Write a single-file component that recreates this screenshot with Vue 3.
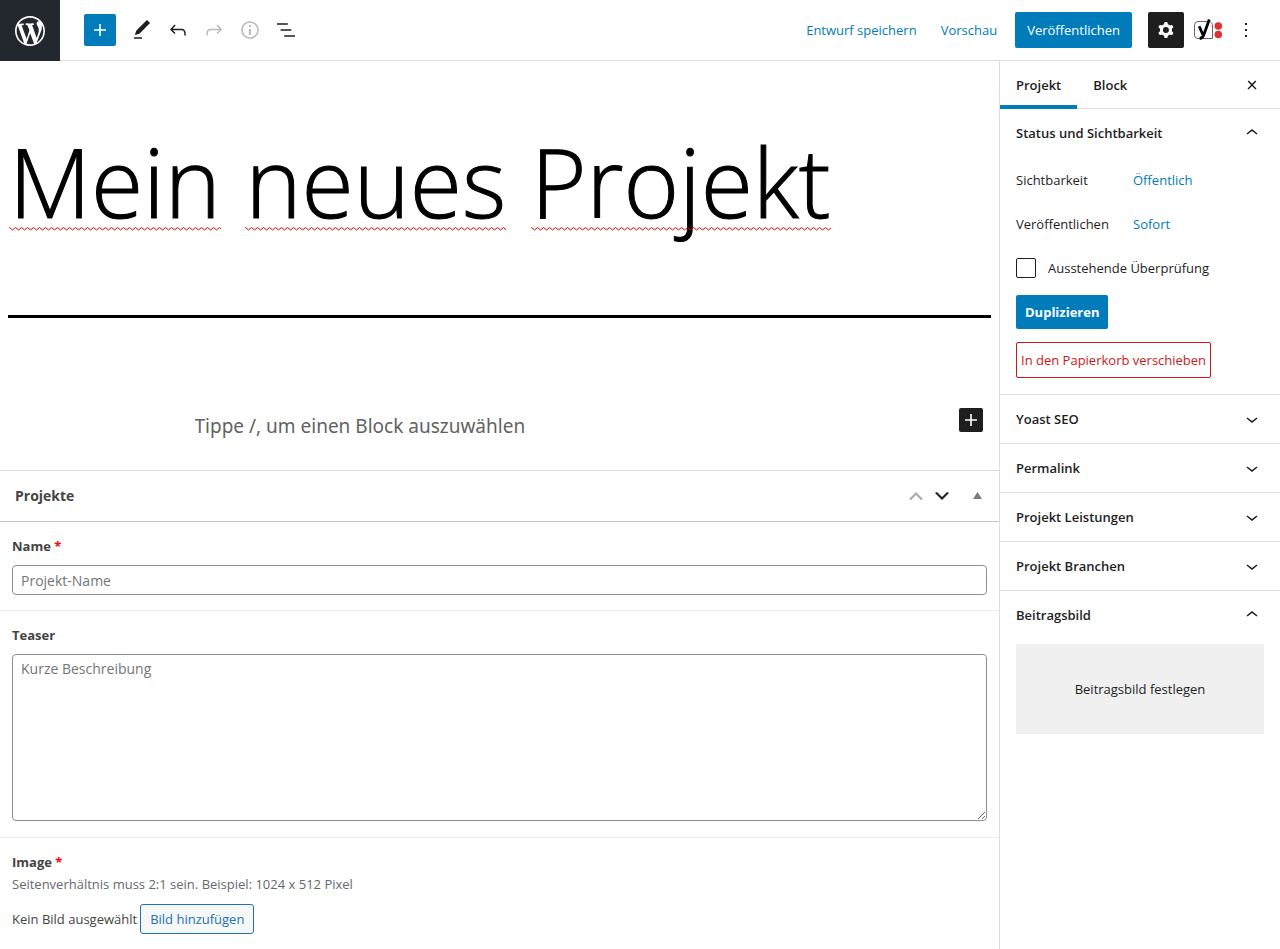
<script setup>
import { ref } from 'vue'

const icons = {
  wordpress: 'M20 10c0-5.51-4.49-10-10-10C4.48 0 0 4.49 0 10c0 5.52 4.48 10 10 10 5.51 0 10-4.48 10-10zM7.78 15.37L4.37 6.22c.55-.02 1.17-.08 1.17-.08.5-.06.44-1.13-.06-1.11 0 0-1.45.11-2.37.11-.18 0-.37 0-.58-.01C4.12 2.69 6.87 1.11 10 1.11c2.33 0 4.45.87 6.05 2.34-.68-.11-1.65.39-1.65 1.58 0 .74.45 1.36.9 2.1.35.61.55 1.36.55 2.46 0 1.49-1.4 5-1.4 5l-3.03-8.37c.54-.02.82-.17.82-.17.5-.05.44-1.25-.06-1.22 0 0-1.44.12-2.38.12-.87 0-2.33-.12-2.33-.12-.5-.03-.56 1.2-.06 1.22l.92.08 1.26 3.41zM17.41 10c.24-.64.74-1.87.43-4.25.7 1.29 1.05 2.71 1.05 4.25 0 3.29-1.73 6.24-4.4 7.78.97-2.59 1.94-5.2 2.92-7.78zM6.1 18.09C3.12 16.65 1.11 13.53 1.11 10c0-1.3.23-2.48.72-3.59C3.25 10.3 4.67 14.2 6.1 18.09zm4.03-6.63l2.58 6.98c-.86.29-1.76.45-2.71.45-.79 0-1.57-.11-2.29-.33.81-2.38 1.62-4.74 2.42-7.1z',
  plus: 'M18 11.2h-5.2V6h-1.6v5.2H6v1.6h5.2V18h1.6v-5.2H18z',
  edit: 'M20.1 5.1L16.9 2 6.2 12.7l-1.3 4.4 4.5-1.3L20.1 5.1zM4 20.8h8v-1.5H4v1.5z',
  undo: 'M18.3 11.7c-.6-.6-1.4-.9-2.3-.9H6.7l2.9-3.3-1.1-1-4.5 5L8.5 16l1-1-2.7-2.7H16c.5 0 .9.2 1.3.5 1 1 1 3.4 1 4.5v.3h1.5v-.2c0-1.5 0-4.3-1.5-5.7z',
  redo: 'M15.6 6.5l-1.1 1 2.9 3.3H8c-.9 0-1.7.3-2.3.9-1.4 1.5-1.4 4.2-1.4 5.6v.2h1.5v-.3c0-1.1 0-3.5 1-4.5.3-.3.7-.5 1.3-.5h9.2L14.5 15l1.1 1.1 4.6-4.6-4.6-5z',
  info: 'M12 3.2c-4.8 0-8.8 3.9-8.8 8.8 0 4.8 3.9 8.8 8.8 8.8 4.8 0 8.8-3.9 8.8-8.8 0-4.8-4-8.8-8.8-8.8zm0 16c-4 0-7.2-3.3-7.2-7.2C4.8 8 8 4.8 12 4.8s7.2 3.3 7.2 7.2c0 4-3.2 7.2-7.2 7.2zM11 17h2v-6h-2v6zm0-8h2V7h-2v2z',
  list: 'M13.8 5.2H3v1.5h10.8V5.2zm-3.6 12v1.5H21v-1.5H10.2zm7.2-6H6.6v1.5h10.8v-1.5z',
  cog: 'M10.289 4.836A1 1 0 0111.275 4h1.306a1 1 0 01.987.836l.244 1.466c.787.26 1.503.679 2.108 1.218l1.393-.522a1 1 0 011.216.437l.653 1.13a1 1 0 01-.23 1.273l-1.148.944a6.025 6.025 0 010 2.435l1.149.946a1 1 0 01.23 1.272l-.653 1.13a1 1 0 01-1.216.437l-1.394-.522c-.605.54-1.32.958-2.108 1.218l-.244 1.466a1 1 0 01-.987.836h-1.306a1 1 0 01-.986-.836l-.244-1.466a5.995 5.995 0 01-2.108-1.218l-1.394.522a1 1 0 01-1.217-.436l-.653-1.131a1 1 0 01.23-1.272l1.149-.946a6.026 6.026 0 010-2.435l-1.148-.944a1 1 0 01-.23-1.272l.653-1.131a1 1 0 011.217-.437l1.393.522a5.994 5.994 0 012.108-1.218l.244-1.466zM14.929 12a3 3 0 11-6 0 3 3 0 016 0z',
  more: 'M13 19h-2v-2h2v2zm0-6h-2v-2h2v2zm0-6h-2V5h2v2z',
  close: 'M13 11.9l3.3-3.4-1.1-1-3.2 3.3-3.2-3.3-1.1 1 3.3 3.4-3.5 3.6 1 1L12 13l3.5 3.5 1-1z',
  down: 'M17.5 11.6L12 16l-5.5-4.4.9-1.2L12 14l4.5-3.6 1 1.2z',
  up: 'M6.5 12.4L12 8l5.5 4.4-.9 1.2L12 10l-4.5 3.6-1-1.2z',
}

const tools = [
  { icon: 'edit', label: 'Werkzeuge' },
  { icon: 'undo', label: 'Rückgängig' },
  { icon: 'redo', label: 'Wiederholen', disabled: true },
  { icon: 'info', label: 'Details', disabled: true },
  { icon: 'list', label: 'Listenansicht' },
]

const titleWords = ['Mein', 'neues', 'Projekt']
const closedPanels = ['Yoast SEO', 'Permalink', 'Projekt Leistungen', 'Projekt Branchen']

const pending = ref(false)
const name = ref('')
const teaser = ref('')
</script>

<template>
  <div class="editor">
    <header class="topbar">
      <a class="logo" href="#" aria-label="Beiträge ansehen">
        <svg width="36" height="36" viewBox="-2 -2 24 24"><path :d="icons.wordpress" /></svg>
      </a>
      <div class="tools">
        <button class="insert" type="button" aria-label="Block hinzufügen">
          <svg width="24" height="24" viewBox="0 0 24 24"><path :d="icons.plus" /></svg>
        </button>
        <button
          v-for="tool in tools"
          :key="tool.icon"
          class="tool"
          type="button"
          :aria-label="tool.label"
          :disabled="tool.disabled"
        >
          <svg width="24" height="24" viewBox="0 0 24 24"><path :d="icons[tool.icon]" /></svg>
        </button>
      </div>
      <div class="actions">
        <button class="link" type="button">Entwurf speichern</button>
        <button class="link" type="button">Vorschau</button>
        <button class="publish" type="button">Veröffentlichen</button>
        <button class="settings" type="button" aria-label="Einstellungen">
          <svg width="24" height="24" viewBox="0 0 24 24"><path fill-rule="evenodd" :d="icons.cog" /></svg>
        </button>
        <button class="yoast" type="button" aria-label="Yoast">
          <svg width="32" height="24" viewBox="0 0 32 24">
            <path d="M15 3.500H6a3.500 3.500 0 0 0-3.500 3.500v10A3.500 3.500 0 0 0 6 20.500H20.500V8c0-2-.7-3.400-2-4" fill="none" stroke="#666" />
            <path d="M7.200 8.200l3.600 8.300M17.300 1.500l-5.200 14.500c-.9 2.600-2 4.400-4.400 4.700" fill="none" stroke="#000" stroke-width="2.800" />
            <circle cx="26.300" cy="8" r="3.800" fill="#dc3232" />
            <circle cx="26.300" cy="16.500" r="3.800" fill="#dc3232" />
          </svg>
        </button>
        <button class="more" type="button" aria-label="Optionen">
          <svg width="24" height="24" viewBox="0 0 24 24"><path :d="icons.more" /></svg>
        </button>
      </div>
    </header>

    <div class="body">
      <main class="content">
        <section class="canvas">
          <h1 class="title">
            <template v-for="word in titleWords" :key="word"><span class="misspelled">{{ word }}</span>{{ ' ' }}</template>
          </h1>
          <div class="block-row">
            <input class="prompt" type="text" aria-label="Neuer Block" placeholder="Tippe /, um einen Block auszuwählen" />
            <button class="inserter" type="button" aria-label="Block hinzufügen">
              <svg width="24" height="24" viewBox="0 0 24 24"><path :d="icons.plus" /></svg>
            </button>
          </div>
        </section>

        <section class="metabox">
          <div class="metabox-head">
            <h2>Projekte</h2>
            <button class="order" type="button" aria-label="Nach oben" disabled>
              <svg width="20" height="20" viewBox="0 0 20 20"><path d="M15 14l-5-5-5 5-2-1 7-7 7 7z" /></svg>
            </button>
            <button class="order" type="button" aria-label="Nach unten">
              <svg width="20" height="20" viewBox="0 0 20 20"><path d="M5 6l5 5 5-5 2 1-7 7-7-7z" /></svg>
            </button>
            <button class="toggle" type="button" aria-label="Bedienfeld umschalten">
              <svg width="20" height="20" viewBox="0 0 20 20"><path d="M6 13l4.500-7 4.500 7z" /></svg>
            </button>
          </div>
          <div class="field">
            <label for="name">Name <span class="required">*</span></label>
            <input id="name" v-model="name" class="box" type="text" placeholder="Projekt-Name" />
          </div>
          <div class="field">
            <label for="teaser">Teaser</label>
            <textarea id="teaser" v-model="teaser" class="box" placeholder="Kurze Beschreibung"></textarea>
          </div>
          <div class="field">
            <label for="image">Image <span class="required">*</span></label>
            <p class="hint">Seitenverhältnis muss 2:1 sein. Beispiel: 1024 x 512 Pixel</p>
            <div class="image-row">
              <span>Kein Bild ausgewählt</span>
              <button id="image" class="add-image" type="button">Bild hinzufügen</button>
            </div>
          </div>
        </section>
      </main>

      <aside class="sidebar">
        <div class="tabs">
          <button class="tab active" type="button">Projekt</button>
          <button class="tab" type="button">Block</button>
          <button class="close" type="button" aria-label="Einstellungen schließen">
            <svg width="24" height="24" viewBox="0 0 24 24"><path :d="icons.close" /></svg>
          </button>
        </div>

        <section class="panel">
          <button class="panel-head" type="button" aria-expanded="true">
            <span>Status und Sichtbarkeit</span>
            <svg width="24" height="24" viewBox="0 0 24 24"><path :d="icons.up" /></svg>
          </button>
          <div class="status">
            <div class="row"><span>Sichtbarkeit</span><button class="link" type="button">Öffentlich</button></div>
            <div class="row"><span>Veröffentlichen</span><button class="link" type="button">Sofort</button></div>
            <label class="check"><input v-model="pending" type="checkbox" />Ausstehende Überprüfung</label>
            <button class="duplicate" type="button">Duplizieren</button>
            <button class="trash" type="button">In den Papierkorb verschieben</button>
          </div>
        </section>

        <section v-for="panel in closedPanels" :key="panel" class="panel">
          <button class="panel-head" type="button" aria-expanded="false">
            <span>{{ panel }}</span>
            <svg width="24" height="24" viewBox="0 0 24 24"><path :d="icons.down" /></svg>
          </button>
        </section>

        <section class="panel last">
          <button class="panel-head" type="button" aria-expanded="true">
            <span>Beitragsbild</span>
            <svg width="24" height="24" viewBox="0 0 24 24"><path :d="icons.up" /></svg>
          </button>
          <div class="featured">
            <button type="button">Beitragsbild festlegen</button>
          </div>
        </section>
      </aside>
    </div>
  </div>
</template>

<style>
body {
  background: #fff;
}
</style>

<style scoped>
.editor,
.editor * {
  box-sizing: border-box;
}

.editor {
  display: flex;
  flex-direction: column;
  min-height: 100vh;
  color: #1e1e1e;
  font-family: "Open Sans", "Noto Sans", sans-serif;
  font-size: 13px;
  line-height: 20px;
}

button,
input,
textarea {
  margin: 0;
  font: inherit;
  color: inherit;
}

button {
  display: flex;
  align-items: center;
  justify-content: center;
  padding: 0;
  border: 0;
  border-radius: 2px;
  background: none;
  white-space: nowrap;
}

svg {
  display: block;
  flex: none;
  fill: currentColor;
}

.topbar {
  display: flex;
  align-items: center;
  height: 61px;
  border-bottom: 1px solid #ddd;
}

.logo {
  display: flex;
  align-items: center;
  justify-content: center;
  width: 60px;
  height: 61px;
  margin-bottom: -1px;
  background: #23282e;
  color: #fff;
}

.tools {
  display: flex;
  align-items: center;
  margin-left: 24px;
}

.insert {
  width: 32px;
  height: 32px;
  margin-right: 8px;
  background: #007cba;
  color: #fff;
}

.tool {
  width: 36px;
  height: 36px;
}

.tool:disabled {
  color: #bbb;
}

.actions {
  display: flex;
  align-items: center;
  margin-left: auto;
  padding-right: 16px;
}

.link {
  color: #007cba;
}

.actions .link {
  height: 36px;
  padding: 0 12px;
}

.publish {
  height: 36px;
  margin: 0 16px 0 6px;
  padding: 0 12px;
  background: #007cba;
  color: #fff;
}

.settings {
  width: 36px;
  height: 36px;
  margin-right: 8px;
  background: #1e1e1e;
  color: #fff;
}

.yoast {
  width: 32px;
  height: 36px;
}

.more {
  width: 36px;
  height: 36px;
  margin-left: 4px;
}

.body {
  display: grid;
  flex: 1;
  grid-template-columns: minmax(0, 1fr) 281px;
}

.canvas {
  padding: 55px 8px 26px;
}

.title {
  margin: 0 0 84px;
  padding: 0 1px 68px;
  border-bottom: 3px solid #000;
  color: #000;
  font-size: 95px;
  font-weight: 300;
  line-height: 131px;
  -webkit-text-stroke: 1px #000;
}

.misspelled {
  position: relative;
}

.misspelled::after {
  position: absolute;
  right: 0;
  bottom: 15px;
  left: 0;
  height: 4px;
  background: url("data:image/svg+xml,%3Csvg xmlns='http://www.w3.org/2000/svg' width='6' height='4'%3E%3Cpath d='M-1 0.500L0.500 0.500L3.500 3L6.500 0.500' fill='none' stroke='%23e00000'/%3E%3C/svg%3E") repeat-x;
  content: "";
}

.block-row {
  display: grid;
  grid-template-columns: 1fr minmax(0, 610px) 1fr;
  align-items: start;
}

.prompt {
  grid-column: 2;
  width: 100%;
  height: 36px;
  margin-top: 6px;
  padding: 0;
  border: 0;
  outline: 0;
  background: none;
  font-family: "Noto Sans", "Open Sans", sans-serif;
  font-size: 19px;
}

.prompt::placeholder {
  color: #626262;
  opacity: 1;
}

.inserter {
  justify-self: end;
  width: 24px;
  height: 24px;
  margin: 6px 8px 0 0;
  background: #1e1e1e;
  color: #fff;
}

.metabox {
  border-top: 1px solid #ddd;
  color: #444;
}

.metabox-head {
  display: flex;
  align-items: center;
  height: 51px;
  padding: 0 12px 0 15px;
  border-bottom: 1px solid #c3c4c7;
}

.metabox-head h2 {
  margin: 0 auto 0 0;
  font-size: 14px;
  font-weight: 700;
}

.order {
  width: 26px;
  height: 36px;
  color: #1d2327;
}

.order:disabled {
  color: #a7aaad;
}

.toggle {
  width: 20px;
  height: 36px;
  margin-left: 12px;
  color: #787c82;
}

.field {
  padding: 14px 12px 15px;
  border-bottom: 1px solid #eee;
}

.field:last-child {
  border-bottom: 0;
}

.field label {
  display: block;
  font-weight: 700;
}

.required {
  color: #f00;
}

.box {
  display: block;
  width: 100%;
  height: 30px;
  margin-top: 9px;
  padding: 0 8px;
  border: 1px solid #8c8f94;
  border-radius: 4px;
  background: #fff;
  font-size: 14px;
}

textarea.box {
  height: 167px;
  margin-bottom: 1px;
  padding: 4px 8px;
  resize: vertical;
}

.box::placeholder {
  color: #757575;
  opacity: 1;
}

.hint {
  margin: 2px 0 10px;
  color: #646970;
}

.image-row {
  display: flex;
  align-items: center;
  gap: 3px;
}

.add-image {
  height: 30px;
  padding: 0 9px;
  border: 1px solid #2271b1;
  border-radius: 3px;
  background: #f6f7f7;
  color: #2271b1;
}

.sidebar {
  border-left: 1px solid #ddd;
}

.tabs {
  display: flex;
  height: 48px;
  border-bottom: 1px solid #ddd;
}

.tab {
  height: 48px;
  padding: 0 16px;
  border-radius: 0;
  font-weight: 600;
}

.tab.active {
  box-shadow: inset 0 -4px #007cba;
}

.close {
  width: 24px;
  height: 48px;
  margin: 0 16px 0 auto;
}

.panel {
  border-bottom: 1px solid #ddd;
}

.panel.last {
  border-bottom: 0;
}

.panel-head {
  justify-content: space-between;
  width: 100%;
  height: 48px;
  padding: 0 16px;
  font-weight: 600;
}

.status {
  display: flex;
  flex-direction: column;
  align-items: flex-start;
  padding: 5px 16px 16px;
}

.row {
  display: grid;
  grid-template-columns: 117px auto;
  align-items: center;
  height: 36px;
  margin-bottom: 8px;
}

.check {
  display: flex;
  align-items: center;
  gap: 12px;
  height: 36px;
  margin-bottom: 9px;
}

.check input {
  width: 20px;
  height: 20px;
  border: 1px solid #1e1e1e;
  border-radius: 2px;
  background: #fff;
  appearance: none;
}

.check input:checked {
  background: #007cba;
}

.duplicate {
  height: 34px;
  margin-bottom: 13px;
  padding: 0 9px;
  background: #007cba;
  color: #fff;
  font-weight: 700;
}

.trash {
  height: 36px;
  padding: 0 4px;
  border: 1px solid #cc1818;
  color: #cc1818;
}

.featured {
  padding: 5px 16px 16px;
}

.featured button {
  width: 100%;
  height: 90px;
  border-radius: 0;
  background: #f0f0f0;
}
</style>
